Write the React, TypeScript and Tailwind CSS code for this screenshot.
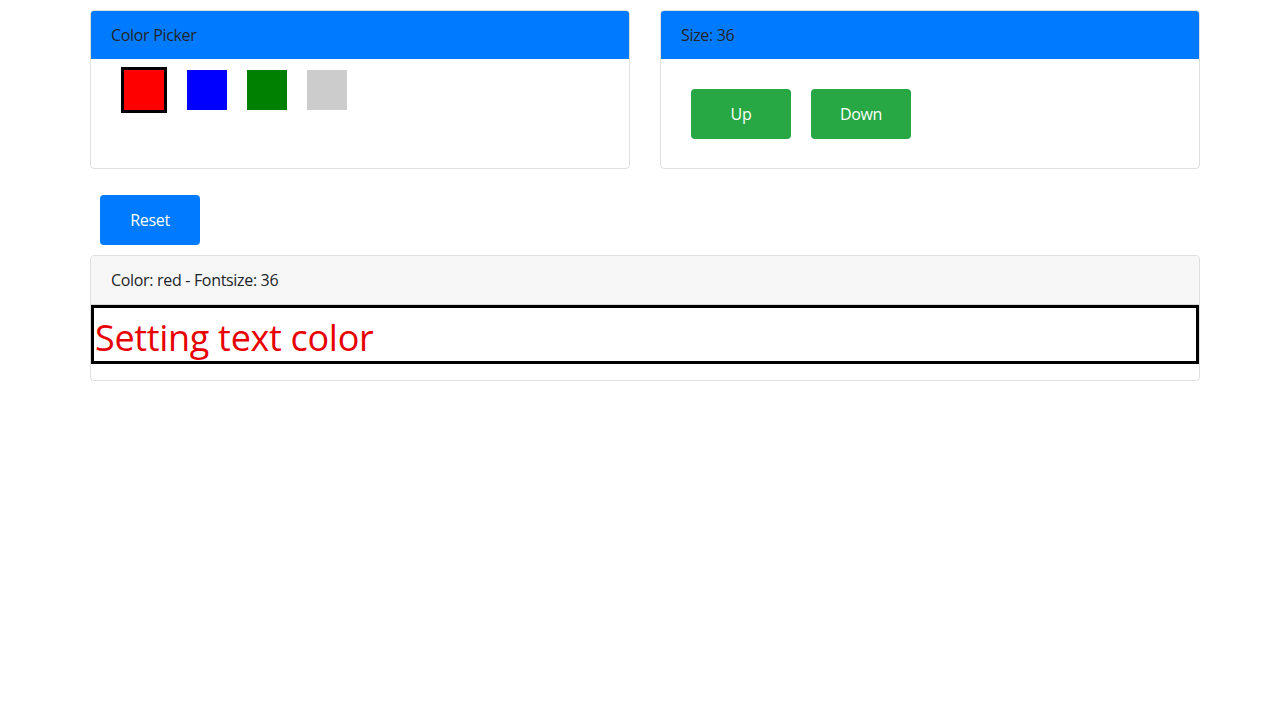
// Text styling demo: colour picker, font size controls, preview card.

import { useState } from "react";

const SWATCHES = [
  { name: "red", cls: "bg-[#ff0000]" },
  { name: "blue", cls: "bg-[#0000ff]" },
  { name: "green", cls: "bg-[#008000]" },
  { name: "lightgray", cls: "bg-[#cccccc]" },
];

const FONT = "font-['Segoe_UI','Open_Sans',sans-serif]";

export default function App() {
  const [color, setColor] = useState("red");
  const [size, setSize] = useState(36);

  return (
    <div className={`min-h-screen bg-white text-[16px] leading-[1.5] tracking-[-0.02em] text-[#212529] ${FONT}`}>
      <div className="ml-[90px] w-[1110px] pt-[10px]">
        <div className="mb-4 grid grid-cols-2 gap-[30px]">
          <div className="flex flex-col overflow-hidden rounded border border-black/[.125]">
            <div className="h-[48px] bg-[#007bff] px-5 py-3">Color Picker</div>
            <div className="flex flex-1 items-start px-5 pt-2">
              {SWATCHES.map((s) => (
                <button
                  key={s.name}
                  onClick={() => setColor(s.name)}
                  className={`mx-[10px] h-[40px] w-[40px] ${s.cls} ${color === s.name ? "box-content border-[3px] border-black" : "mt-[3px]"}`}
                />
              ))}
            </div>
          </div>

          <div className="flex flex-col overflow-hidden rounded border border-black/[.125]">
            <div className="h-[48px] bg-[#007bff] px-5 py-3">Size: {size}</div>
            <div className="flex px-5 pt-5 pb-[19px]">
              <button
                onClick={() => setSize(size + 2)}
                className="m-[10px] h-[50px] w-[100px] rounded bg-[#28a745] text-white"
              >
                Up
              </button>
              <button
                onClick={() => setSize(size - 2)}
                className="m-[10px] h-[50px] w-[100px] rounded bg-[#28a745] text-white"
              >
                Down
              </button>
            </div>
          </div>
        </div>

        <button
          onClick={() => {
            setColor("red");
            setSize(36);
          }}
          className="m-[10px] h-[50px] w-[100px] rounded bg-[#007bff] text-white"
        >
          Reset
        </button>

        <div className="overflow-hidden rounded border border-black/[.125]">
          <div className="h-[49px] border-b border-black/[.125] bg-[#f7f7f7] px-5 py-3">
            Color: {color} - Fontsize: {size}
          </div>
          <p
            className="mb-4 border-[3px] border-black px-px pt-[6px] leading-[47px]"
            style={{ fontSize: size, color: color === "red" ? "#e80000" : color }}
          >
            Setting text color
          </p>
        </div>
      </div>
    </div>
  );
}
